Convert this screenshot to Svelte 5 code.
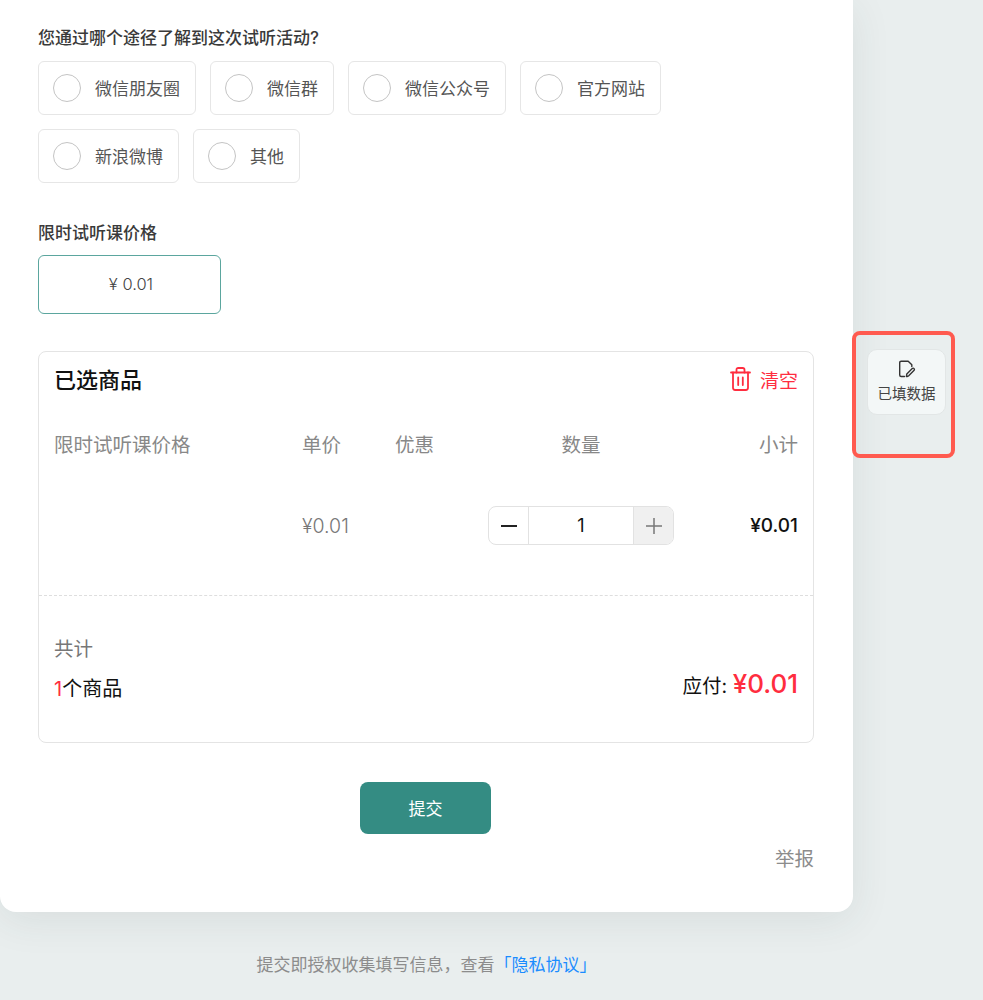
<script>
	let options = ['微信朋友圈', '微信群', '微信公众号', '官方网站', '新浪微博', '其他'];
</script>

<div class="page">
	<main class="card">
		<div class="label">您通过哪个途径了解到这次试听活动?</div>
		<div class="options">
			{#each options as opt}
				<div class="option">
					<span class="radio"></span>
					<span class="opt-text">{opt}</span>
				</div>
			{/each}
		</div>

		<div class="label price-label">限时试听课价格</div>
		<div class="price-box">¥ 0.01</div>

		<section class="cart">
			<div class="cart-head">
				<div class="cart-title">已选商品</div>
				<div class="clear">
					<svg width="21" height="24" viewBox="0 0 21 24" fill="none" stroke="currentColor" stroke-width="1.800" stroke-linecap="round" stroke-linejoin="round">
						<path d="M1 5.500h19" />
						<path d="M6.500 5.500V2.800c0-1.100.7-1.800 1.800-1.800h4.400c1.100 0 1.800.7 1.800 1.800v2.700" />
						<path d="M3 5.500v15.300c0 1.300.8 2.200 2.200 2.200h10.600c1.400 0 2.200-.9 2.200-2.200V5.500" />
						<path d="M8.200 10.500v7.500M12.800 10.500v7.500" />
					</svg>
					<span>清空</span>
				</div>
			</div>

			<div class="cols cols-head">
				<div>限时试听课价格</div>
				<div>单价</div>
				<div>优惠</div>
				<div class="center">数量</div>
				<div class="right">小计</div>
			</div>

			<div class="cols cols-row">
				<div></div>
				<div class="unit">¥0.01</div>
				<div></div>
				<div class="stepper">
					<span class="step">
						<svg width="16" height="16" viewBox="0 0 16 16"><path d="M0 8h16" stroke="#222" stroke-width="2" /></svg>
					</span>
					<span class="qty">1</span>
					<span class="step plus">
						<svg width="16" height="16" viewBox="0 0 16 16"><path d="M0 8h16M8 0v16" stroke="#777" stroke-width="1.500" /></svg>
					</span>
				</div>
				<div class="right subtotal">¥0.01</div>
			</div>

			<div class="summary">
				<div>
					<div class="total-label">共计</div>
					<div class="count"><span class="red">1</span>个商品</div>
				</div>
				<div class="pay">应付: <span class="amount">¥0.01</span></div>
			</div>
		</section>

		<div class="submit-wrap">
			<button class="submit" type="button">提交</button>
		</div>
		<div class="report">举报</div>
	</main>

	<footer class="foot">提交即授权收集填写信息，查看<span class="link">「隐私协议」</span></footer>

	<aside class="float-mark">
		<div class="saved">
			<svg width="18" height="18" viewBox="0 0 18 18" fill="none" stroke="#333" stroke-width="1.400" stroke-linecap="round" stroke-linejoin="round">
				<path d="M6.500 16.500H3.200c-.9 0-1.500-.6-1.500-1.500V2.700c0-.9.6-1.500 1.500-1.500h7l3.600 3.600v1.700" />
				<path d="M9 16.500h-.6l.4-2.600 5.200-5.200c.7-.7 1.600-.7 2.100-.1.500.6.400 1.400-.2 2l-5.200 5.200z" />
			</svg>
			<span class="saved-text">已填数据</span>
		</div>
	</aside>
</div>

<style>
	:global(body) {
		margin: 0;
		background: #e9eeee;
	}
	.page {
		position: relative;
		min-height: 1000px;
		overflow: hidden;
		background: #e9eeee;
		font-family: Inter, "Noto Sans CJK SC", sans-serif;
		color: #333;
	}
	.card {
		box-sizing: border-box;
		width: 853px;
		padding: 28px 39px 41px 38px;
		background: #fff;
		border-radius: 0 0 16px 16px;
		box-shadow: 0 8px 40px rgba(40, 70, 70, 0.09);
	}
	.label {
		font-size: 17px;
		line-height: 20px;
		font-weight: 500;
		color: #3a3a3a;
	}
	.options {
		display: flex;
		flex-wrap: wrap;
		gap: 14px;
		margin-top: 13px;
		width: 700px;
	}
	.option {
		box-sizing: border-box;
		display: flex;
		align-items: center;
		gap: 14px;
		height: 54px;
		padding: 0 15px 0 14px;
		border: 1px solid #e6e6e6;
		border-radius: 6px;
		font-size: 17px;
		color: #555;
	}
	.opt-text {
		position: relative;
		top: -1px;
	}
	.radio {
		box-sizing: border-box;
		width: 28px;
		height: 28px;
		border: 1px solid #c4c4c4;
		border-radius: 50%;
	}
	.price-label {
		margin-top: 40px;
	}
	.price-box {
		box-sizing: border-box;
		display: flex;
		align-items: center;
		justify-content: center;
		width: 183px;
		height: 59px;
		margin-top: 12px;
		padding: 0 0 2px 3px;
		border: 1px solid #5ba69e;
		border-radius: 6px;
		font-size: 16.500px;
		font-weight: 300;
		color: #444;
	}
	.cart {
		box-sizing: border-box;
		height: 392px;
		margin-top: 37px;
		padding: 0 15px;
		border: 1px solid #e4e4e4;
		border-radius: 8px;
	}
	.cart-head {
		display: flex;
		align-items: center;
		justify-content: space-between;
		height: 52px;
	}
	.cart-title {
		font-size: 22px;
		font-weight: 500;
		color: #111;
	}
	.clear {
		display: flex;
		align-items: center;
		gap: 9px;
		margin-top: 2px;
		font-size: 19px;
		color: #ff2d3f;
	}
	.cols {
		display: grid;
		grid-template-columns: 248px 93px 93px 186px 1fr;
		align-items: center;
		font-size: 19.500px;
	}
	.cols-head {
		height: 38px;
		margin-top: 20px;
		color: #888;
	}
	.cols-row {
		margin-top: 44px;
	}
	.center {
		text-align: center;
	}
	.right {
		text-align: right;
	}
	.unit {
		font-weight: 300;
		color: #777;
	}
	.subtotal {
		font-size: 19px;
		font-weight: 500;
		color: #111;
	}
	.stepper {
		box-sizing: border-box;
		display: grid;
		grid-template-columns: 39px 1fr 40px;
		height: 39px;
		border: 1px solid #e2e2e2;
		border-radius: 8px;
		overflow: hidden;
		font-size: 18px;
	}
	.step {
		display: flex;
		align-items: center;
		justify-content: center;
	}
	.plus {
		background: #f0f0f0;
		border-left: 1px solid #e2e2e2;
	}
	.qty {
		display: flex;
		align-items: center;
		justify-content: center;
		border-left: 1px solid #e2e2e2;
		color: #111;
	}
	.summary {
		display: flex;
		align-items: center;
		justify-content: space-between;
		margin: 50px -15px 0;
		padding: 41px 15px 0;
		border-top: 1px dashed #dedede;
	}
	.total-label {
		font-size: 19.500px;
		line-height: 24px;
		color: #777;
	}
	.count {
		margin-top: 16px;
		font-size: 20px;
		line-height: 24px;
		color: #111;
	}
	.red {
		color: #ff2d3f;
	}
	.pay {
		margin-top: 28px;
		font-size: 19.500px;
		color: #111;
	}
	.amount {
		font-size: 26px;
		font-weight: 500;
		color: #ff2d3f;
	}
	.submit-wrap {
		display: flex;
		justify-content: center;
		margin-top: 39px;
		padding-right: 1px;
	}
	.submit {
		width: 131px;
		height: 52px;
		padding: 0 0 1px;
		border: none;
		border-radius: 8px;
		background: #348c83;
		font-family: inherit;
		font-size: 17px;
		color: #fff;
	}
	.report {
		margin-top: 13px;
		font-size: 19.500px;
		line-height: 24px;
		text-align: right;
		color: #8c8c8c;
	}
	.foot {
		width: 853px;
		margin-top: 41px;
		font-size: 17px;
		line-height: 24px;
		text-align: center;
		color: #8c8c8c;
	}
	.link {
		color: #1a8cff;
	}
	.float-mark {
		box-sizing: border-box;
		position: absolute;
		left: 852px;
		top: 331px;
		width: 103px;
		height: 127px;
		padding: 14px 0 0 11px;
		border: 4px solid #ff5a4f;
		border-radius: 8px;
	}
	.saved {
		box-sizing: border-box;
		display: flex;
		flex-direction: column;
		align-items: center;
		width: 79px;
		height: 66px;
		padding-top: 10px;
		border: 1px solid #e2e6e6;
		border-radius: 10px;
		background: #f3f7f7;
		font-size: 14.500px;
		line-height: 20px;
		color: #444;
	}
	.saved-text {
		margin-top: 6px;
	}
</style>
